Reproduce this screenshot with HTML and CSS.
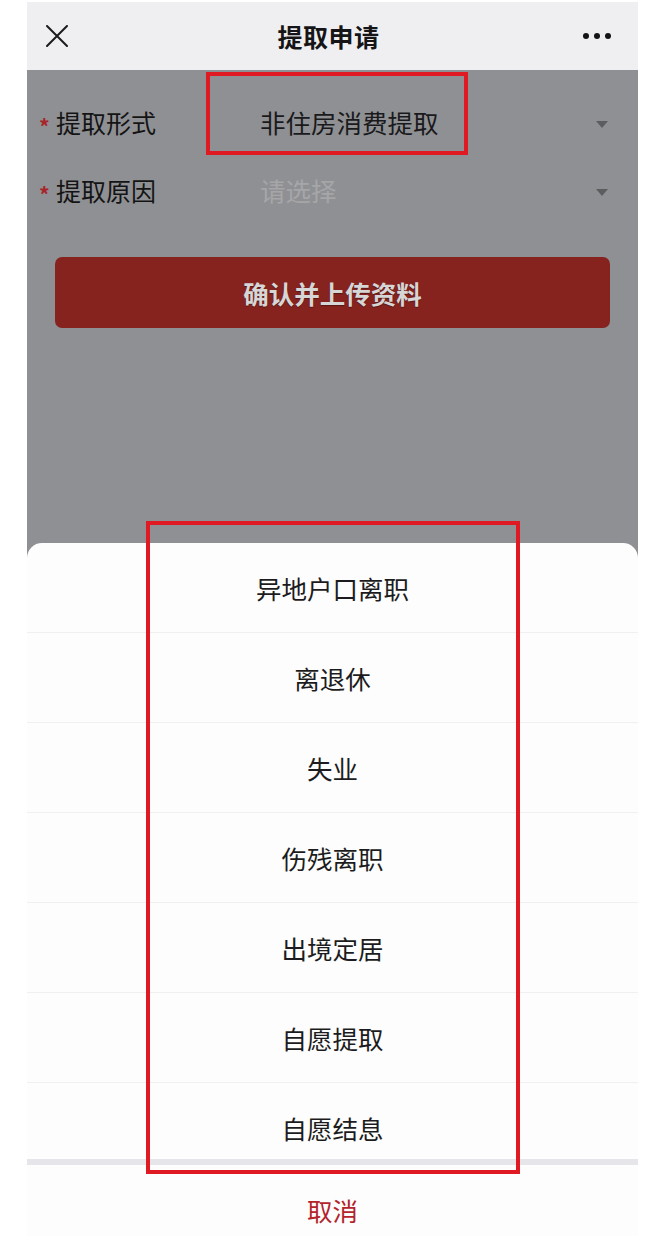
FILE: index.html
```html
<!DOCTYPE html>
<html lang="zh-CN">
<head>
<meta charset="utf-8">
<title>提取申请</title>
<link rel="stylesheet" href="styles.css">
</head>
<body>
<div class="phone">
  <header class="nav">
    <span class="nav-close">
      <svg width="22" height="22" viewBox="0 0 22 22"><path d="M1 1 L21 21 M21 1 L1 21" stroke="#1b1b1d" stroke-width="2" fill="none" stroke-linecap="round"/></svg>
    </span>
    <h1 class="nav-title">提取申请</h1>
    <span class="nav-more"><i></i><i></i><i></i></span>
  </header>

  <main class="form">
    <div class="row">
      <span class="star">*</span>
      <span class="label">提取形式</span>
      <span class="value">非住房消费提取</span>
      <span class="caret"></span>
    </div>
    <div class="row">
      <span class="star">*</span>
      <span class="label">提取原因</span>
      <span class="value placeholder">请选择</span>
      <span class="caret"></span>
    </div>
    <button class="submit">确认并上传资料</button>
  </main>

  <section class="sheet">
    <ul class="sheet-list">
      <li>异地户口离职</li>
      <li>离退休</li>
      <li>失业</li>
      <li>伤残离职</li>
      <li>出境定居</li>
      <li>自愿提取</li>
      <li>自愿结息</li>
    </ul>
    <div class="sheet-gap"></div>
    <div class="sheet-cancel">取消</div>
  </section>
</div>

<div class="mark mark-type"></div>
<div class="mark mark-list"></div>
</body>
</html>
```

FILE: styles.css
```css
* {
  box-sizing: border-box;
}

html, body {
  margin: 0;
  padding: 0;
  height: 1236px;
  overflow: hidden;
  background: #ffffff;
  font-family: "Noto Sans CJK SC", "Noto Sans", sans-serif;
}

.phone {
  position: relative;
  width: 611px;
  height: 1236px;
  margin-left: 27px;
  overflow: hidden;
  background: #8f9093;
}

/* top navigation bar */
.nav {
  height: 70px;
  border-top: 2px solid #ffffff;
  background: #efeff1;
  display: grid;
  grid-template-columns: 1fr auto 1fr;
  align-items: center;
  padding: 0 27px 0 19px;
}

.nav-close {
  display: flex;
  align-items: center;
}

.nav-title {
  margin: 0;
  font-size: 25px;
  font-weight: 700;
  color: #151517;
  letter-spacing: 0.5px;
  line-height: 1;
}

.nav-more {
  justify-self: end;
  display: flex;
  gap: 5px;
}

.nav-more i {
  width: 6px;
  height: 6px;
  border-radius: 50%;
  background: #141416;
}

/* form under the dimming layer */
.form {
  padding-top: 18px;
}

.row {
  height: 68px;
  display: flex;
  align-items: center;
  padding: 0 30px 0 12px;
}

.star {
  width: 17px;
  font-size: 21px;
  font-weight: 700;
  line-height: 1;
  color: #a8232a;
  padding-top: 8px;
}

.label {
  width: 204px;
  font-size: 25px;
  color: #141414;
  line-height: 1;
}

.value {
  flex: 1;
  font-size: 25.5px;
  color: #1a1a1c;
  line-height: 1;
}

.value.placeholder {
  color: #a6a6a8;
}

.caret {
  width: 0;
  height: 0;
  border-left: 6px solid transparent;
  border-right: 6px solid transparent;
  border-top: 7px solid #5d5d60;
  margin-top: 4px;
}

.submit {
  display: block;
  width: 555px;
  height: 71px;
  margin: 33px 0 0 28px;
  border: 0;
  border-radius: 7px;
  background: #86231f;
  color: #d6d6d6;
  font-family: inherit;
  font-size: 25.5px;
  font-weight: 700;
  text-shadow: 0 1px 1px rgba(0, 0, 0, 0.35);
}

/* action sheet */
.sheet {
  position: absolute;
  left: 0;
  right: 0;
  top: 543px;
  background: #fdfdfe;
  border-radius: 15px 15px 0 0;
}

.sheet-list {
  list-style: none;
  margin: 0;
  padding: 0;
  height: 616px;
  overflow: hidden;
}

.sheet-list li {
  height: 90px;
  display: flex;
  align-items: center;
  justify-content: center;
  font-size: 25.5px;
  color: #1c1c20;
  border-bottom: 1px solid #f0f0f3;
}

.sheet-gap {
  height: 6px;
  background: #e6e6ea;
}

.sheet-cancel {
  height: 88px;
  display: flex;
  align-items: center;
  justify-content: center;
  font-size: 25.5px;
  color: #b3242b;
}

/* red highlight frames drawn over the screen */
.mark {
  position: absolute;
  border: 4px solid #df1a22;
}

.mark-type {
  left: 206px;
  top: 72px;
  width: 262px;
  height: 83px;
}

.mark-list {
  left: 146px;
  top: 521px;
  width: 374px;
  height: 653px;
}
```
